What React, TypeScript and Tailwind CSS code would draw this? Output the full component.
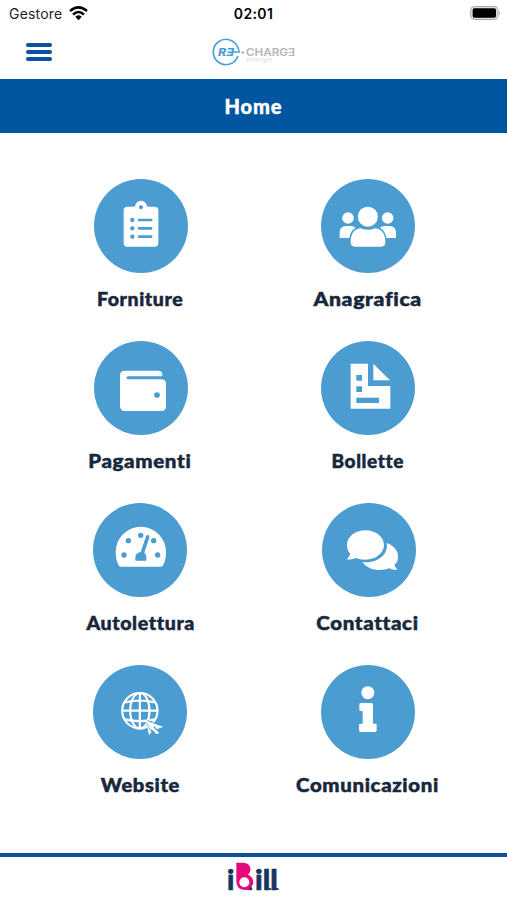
import type { ReactNode } from "react";

type Tile = {
  label: string;
  viewBox: string;
  shift: string;
  stretch: string;
  icon: ReactNode;
};

const BLUE = "#4b9cd1";

const tiles: Tile[] = [
  {
    label: "Forniture",
    viewBox: "41 25 282 282",
    shift: "",
    stretch: "scale-x-[1.025]",
    icon: (
      <>
        <rect x="130" y="108" width="104" height="120" rx="11" />
        <path d="M154 121v-13h10a18 18 0 0 1 36 0h10v13z" />
        <circle cx="182" cy="110" r="6" fill={BLUE} />
        <g fill={BLUE}>
          <circle cx="156" cy="148" r="6.5" />
          <circle cx="156" cy="173" r="6.5" />
          <circle cx="156" cy="198" r="6.5" />
          <rect x="173" y="144" width="43" height="8" rx="2" />
          <rect x="173" y="169" width="43" height="8" rx="2" />
          <rect x="173" y="194" width="43" height="8" rx="2" />
        </g>
      </>
    ),
  },
  {
    label: "Anagrafica",
    viewBox: "63 25 282 282",
    shift: "",
    stretch: "scale-x-[1.115]",
    icon: (
      <>
        <circle cx="144" cy="142" r="17.5" />
        <circle cx="263" cy="142" r="17.5" />
        <path d="M119 200v-13q0-21 20-21h14q8 0 14 5-17 11-19 31h-27q-2 0-2-2z" />
        <path d="M288 200v-13q0-21-20-21h-14q-8 0-14 5 17 11 19 31h27q2 0 2-2z" />
        <circle cx="203.500" cy="138" r="30" />
        <path d="M152 215q0-39 30-42 22 9 43 0 31 3 31 42 0 13-13 13h-78q-13 0-13-13z" />
      </>
    ),
  },
  {
    label: "Pagamenti",
    viewBox: "41 17 282 282",
    shift: "",
    stretch: "scale-x-[1.08]",
    icon: (
      <>
        <path d="M133 106h100q13 0 13 13v4H143a4.500 4.500 0 0 0 0 9h100q14 0 14 14v67q0 14-14 14H134q-15 0-15-15v-91q0-15 14-15z" />
        <circle cx="230" cy="179" r="8.500" fill={BLUE} />
      </>
    ),
  },
  {
    label: "Bollette",
    viewBox: "63 18 282 282",
    shift: "",
    stretch: "scale-x-100",
    icon: (
      <>
        <path d="M152 86h52v67h67v68H152z" />
        <path d="M220 86l50 50h-50z" />
        <g fill={BLUE}>
          <rect x="169" y="120" width="17" height="17" />
          <rect x="169" y="154" width="17" height="17" />
          <rect x="169" y="188" width="68" height="16" />
        </g>
      </>
    ),
  },
  {
    label: "Autolettura",
    viewBox: "38 22 282 282",
    shift: "-ml-px",
    stretch: "scale-x-[1.03]",
    icon: (
      <>
        <path d="M117 212q-11-15-11-43a75.500 75.500 0 0 1 151 0q0 28-11 43-2 1-5 1H122q-3 0-5-1z" />
        <g fill={BLUE}>
          <circle cx="131" cy="178" r="8" />
          <circle cx="144" cy="135" r="8" />
          <circle cx="181" cy="119" r="8" />
          <circle cx="220" cy="135" r="8" />
          <circle cx="232" cy="178" r="8" />
          <path d="M165 193v-7q0-15 18-17h5q10 5 10 16v8q0 2-2 2h-29q-2 0-2-2z" />
        </g>
        <path d="M185 175L202 124" stroke={BLUE} strokeWidth="11" strokeLinecap="round" />
      </>
    ),
  },
  {
    label: "Contattaci",
    viewBox: "66 23 282 282",
    shift: "ml-px",
    stretch: "scale-x-[1.08]",
    icon: (
      <>
        <path d="M260 143c25 9 42 32 31 56q-3 6-8 10 3 8 9 14-13 2-24-4c-30 11-65 4-81-19 39 5 80-18 73-57z" />
        <path d="M196 105c31 0 56 20 56 44s-25 44-56 44q-17 0-30-5-11 6-26 4 8-8 11-16-10-12-10-27c0-24 24-44 55-44z" />
      </>
    ),
  },
  {
    label: "Website",
    viewBox: "40 24 282 282",
    shift: "-ml-px",
    stretch: "scale-x-[1.06]",
    icon: (
      <>
        <g fill="none" stroke="white" strokeWidth="6.500">
          <circle cx="180.500" cy="161" r="53" />
          <ellipse cx="180.500" cy="161" rx="29" ry="53" />
          <path d="M180.500 108v106M128 161h105M136 136q44-11 89 0M136 187q44 11 89 0" />
        </g>
        <path d="M199 192l52 17-19 8-8-9-3 3 18 17-8 4-15-15-3 3 3 4-8 11z" />
        <path d="M202 190L232 200M200 195L213 222" stroke={BLUE} strokeWidth="2" />
      </>
    ),
  },
  {
    label: "Comunicazioni",
    viewBox: "94 21 282 282",
    shift: "",
    stretch: "scale-x-[1.075]",
    icon: (
      <>
        <circle cx="234.500" cy="104" r="19.500" />
        <path d="M213 135h32q5 0 5 5v57h7q4 0 4 4v16q0 5-5 5h-43q-5 0-5-5v-16q0-4 5-4h6v-38h-6q-4 0-4-4v-15q0-5 4-5z" />
      </>
    ),
  },
];

function StatusBar() {
  return (
    <div className="flex h-[27px] items-center justify-between pl-[9px] pr-[6px] font-[Inter,sans-serif] text-black">
      <div className="flex w-[120px] items-center gap-[7px]">
        <span className="text-[14px] tracking-[0.2px] text-[#222]">Gestore</span>
        <svg className="-mt-px h-[15px] w-[19px]" viewBox="0 0 57 45" fill="none" stroke="black" strokeWidth="7.500">
          <path d="M3 15Q28.500-7 54 15M12 26Q28.500 10 45 26" />
          <path d="M19 32q9.500-8 19 0l-9.500 11z" fill="black" stroke="none" />
        </svg>
      </div>
      <span className="pr-[3px] text-[14px] font-semibold tracking-[0.35px]">02:01</span>
      <div className="flex w-[120px] justify-end">
        <svg className="-mt-px h-[14px] w-[31px]" viewBox="0 0 93 42">
          <rect x="2" y="1.500" width="82" height="39" rx="11" fill="#ddd" stroke="#aaa" strokeWidth="3" />
          <rect x="8" y="7" width="70" height="28" rx="5" fill="black" />
          <path d="M87 15q7 6 0 13z" fill="#aaa" />
        </svg>
      </div>
    </div>
  );
}

function BrandLogo() {
  return (
    <svg className="h-[45px] w-[110px]" viewBox="0 0 330 135" fontFamily="Inter, sans-serif">
      <path d="M114 54A38 38 0 1 0 114 78" fill="none" stroke="#4b9fd8" strokeWidth="5" />
      <text x="54" y="78" fontSize="32" fontWeight="800" fontStyle="italic" fill="#4b9fd8" textLength="48" lengthAdjust="spacingAndGlyphs">RƎ</text>
      <path d="M98 66h20Q118 58 113 53" fill="none" stroke="#4b9fd8" strokeWidth="4" />
      <rect x="124" y="65" width="9" height="5" fill="#aaa" />
      <text x="138" y="77" fontSize="31" fontWeight="600" fill="#b5b5b5" textLength="147" lengthAdjust="spacingAndGlyphs">CHARGƎ</text>
      <text x="138" y="96" fontSize="17" fill="#dedede" textLength="79" lengthAdjust="spacingAndGlyphs">energie</text>
    </svg>
  );
}

function DiscBackground({ viewBox }: { viewBox: string }) {
  const [x, y, w] = viewBox.split(" ").map(Number);
  return <circle cx={x + w / 2} cy={y + w / 2} r={w / 2} fill={BLUE} />;
}

function TileButton({ tile }: { tile: Tile }) {
  return (
    <button className="flex h-[162px] flex-col items-center">
      <svg className={`size-[94px] ${tile.shift}`} viewBox={tile.viewBox} fill="white">
        <DiscBackground viewBox={tile.viewBox} />
        {tile.icon}
      </svg>
      <span
        className={`mt-[12.500px] mr-px text-[19px] leading-7 font-black tracking-[0.6px] whitespace-nowrap text-[#17273c] [-webkit-text-stroke:0.5px_#17273c] ${tile.stretch}`}
      >
        {tile.label}
      </span>
    </button>
  );
}

function FooterLogo() {
  return (
    <svg className="h-[43px] w-[110px]" viewBox="0 0 330 129" fontFamily="Lato, sans-serif" fontWeight="900" fill="#17365f" stroke="#17365f">
      <text x="84" y="99" fontSize="88" strokeWidth="2" textLength="22" lengthAdjust="spacingAndGlyphs">i</text>
      <g stroke="none">
        <path d="M112 17h21c24 0 27 28 13 36 17 3 23 27 9 39q4 3 4 7h-21c-18 0-26-12-26-27z" fill="#e6097e" />
        <circle cx="136" cy="76" r="15" fill="white" />
        <circle cx="155" cy="95" r="5" />
      </g>
      <text x="168" y="99" fontSize="88" strokeWidth="2" textLength="68" lengthAdjust="spacingAndGlyphs">ill</text>
      <path d="M211 93q0 4 6 3M231 93q0 4 8 3" fill="none" strokeWidth="5" />
    </svg>
  );
}

export default function App() {
  return (
    <div className="flex h-[900px] w-[507px] flex-col bg-white font-[Lato,sans-serif]">
      <StatusBar />
      <header className="grid h-[52px] grid-cols-[1fr_110px_1fr] items-center">
        <button className="mb-[2px] ml-[26px] flex w-[26px] flex-col gap-[2.500px]" aria-label="Menu">
          <span className="h-[4.600px] rounded-full bg-[#0c519b]" />
          <span className="h-[4.600px] rounded-full bg-[#0c519b]" />
          <span className="h-[4.600px] rounded-full bg-[#0c519b]" />
        </button>
        <div className="mb-[2px] ml-px">
          <BrandLogo />
        </div>
      </header>
      <h1 className="flex h-[54px] items-center justify-center bg-[#0055a0] text-[20px] font-black tracking-[0.900px] text-white [-webkit-text-stroke:0.4px_white]">
        Home
      </h1>
      <main className="grid grow grid-cols-2 content-start pt-[45.500px] pr-[25px] pl-[27px]">
        {tiles.map((tile) => (
          <TileButton key={tile.label} tile={tile} />
        ))}
      </main>
      <footer className="flex h-[47px] justify-center border-t-4 border-[#0d509a]">
        <FooterLogo />
      </footer>
    </div>
  );
}
